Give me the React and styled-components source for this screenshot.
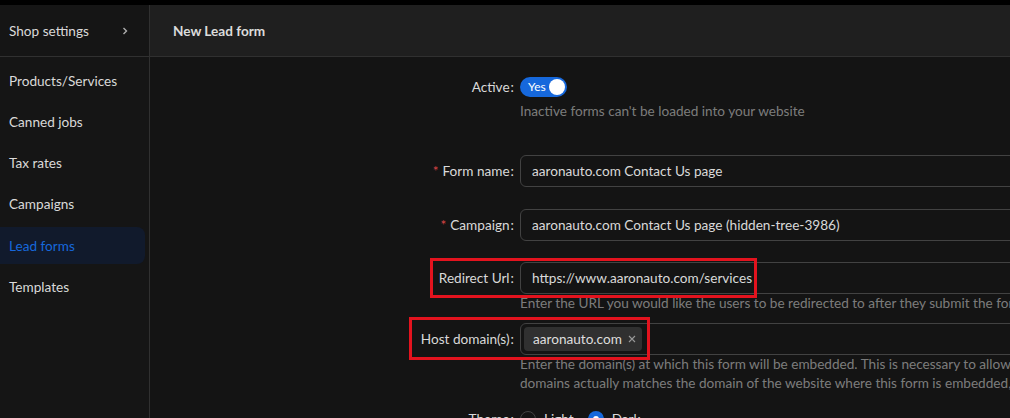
import React, { useState } from "react";
import styled, { createGlobalStyle } from "styled-components";

const GlobalStyle = createGlobalStyle`
  html, body {
    margin: 0;
    padding: 0;
    background: #000;
    overflow: hidden;
  }
  body {
    font-family: Lato, "Open Sans", sans-serif;
    font-size: 13.6px;
    color: rgba(255, 255, 255, 0.85);
  }
`;

const sideItems = [
  "Products/Services",
  "Canned jobs",
  "Tax rates",
  "Campaigns",
  "Lead forms",
  "Templates",
];

const App = () => {
  const [active, setActive] = useState("Lead forms");
  const [dark, setDark] = useState(true);
  return (
    <>
      <GlobalStyle />
      <Page>
        <Sidebar>
          <SideHeader>
            Shop settings
            <Chevron viewBox="0 0 10 10">
              <path d="M3.5 2 L6.5 5 L3.5 8" />
            </Chevron>
          </SideHeader>
          <SideList>
            {sideItems.map(item => (
              <SideItem
                key={item}
                selected={item === active}
                onClick={() => setActive(item)}
              >
                {item}
              </SideItem>
            ))}
          </SideList>
        </Sidebar>
        <Main>
          <MainHeader>New Lead form</MainHeader>
          <Form>
            <Row gap={34}>
              <Label>Active</Label>
              <Control>
                <Switch>
                  <span>Yes</span>
                  <Knob />
                </Switch>
                <Help top={5}>Inactive forms can't be loaded into your website</Help>
              </Control>
            </Row>
            <Row gap={22}>
              <Label required>Form name</Label>
              <Control>
                <Input>aaronauto.com Contact Us page</Input>
              </Control>
            </Row>
            <Row gap={21}>
              <Label required>Campaign</Label>
              <Control>
                <Input>aaronauto.com Contact Us page (hidden-tree-3986)</Input>
              </Control>
            </Row>
            <Row gap={10}>
              <Marker left={280} top={-4} width={327} height={40} />
              <Label>Redirect Url</Label>
              <Control>
                <Input>https://www.aaronauto.com/services</Input>
                <Help>
                  Enter the URL you would like the users to be redirected to
                  after they submit the form
                </Help>
              </Control>
            </Row>
            <Row gap={10}>
              <Marker left={259} top={-6} width={241} height={43} />
              <Label>Host domain(s)</Label>
              <Control>
                <Input tags>
                  <Tag>
                    aaronauto.com
                    <Close viewBox="0 0 10 10">
                      <path d="M2 2 L8 8 M8 2 L2 8" />
                    </Close>
                  </Tag>
                </Input>
                <Help>
                  Enter the domain(s) at which this form will be embedded. This
                  is necessary to allow requests from your website. If none of
                  these<br />
                  domains actually matches the domain of the website where this
                  form is embedded, your form will not work.
                </Help>
              </Control>
            </Row>
            <Row>
              <Label>Theme</Label>
              <Control>
                <Radios>
                  <RadioOpt onClick={() => setDark(false)}>
                    <Radio checked={!dark} />
                    Light
                  </RadioOpt>
                  <RadioOpt onClick={() => setDark(true)}>
                    <Radio checked={dark} />
                    Dark
                  </RadioOpt>
                </Radios>
              </Control>
            </Row>
          </Form>
        </Main>
      </Page>
    </>
  );
};

export default App;

const Page = styled.div`
  display: flex;
  margin-top: 5px;
  height: 413px;
  background: #151515;
`;

const Sidebar = styled.aside`
  width: 149px;
  flex-shrink: 0;
  border-right: 1px solid #303030;
  background: #151515;
`;

const SideHeader = styled.div`
  height: 52px;
  box-sizing: border-box;
  border-bottom: 1px solid #303030;
  display: flex;
  align-items: center;
  justify-content: space-between;
  padding: 0 19px 0 9px;
`;

const Chevron = styled.svg`
  width: 10px;
  height: 10px;
  fill: none;
  stroke: rgba(255, 255, 255, 0.65);
  stroke-width: 1.4;
`;

const SideList = styled.div`
  display: flex;
  flex-direction: column;
  gap: 4.3px;
  padding-top: 5px;
  padding-right: 4px;
`;

const SideItem = styled.div`
  height: 37px;
  display: flex;
  align-items: center;
  padding-left: 9px;
  border-radius: 0 8px 8px 0;
  cursor: pointer;
  color: ${p => (p.selected ? "#1668dc" : "rgba(255,255,255,0.85)")};
  background: ${p => (p.selected ? "#111a2c" : "transparent")};
`;

const Main = styled.main`
  flex: 1;
  min-width: 0;
  background: #141414;
`;

const MainHeader = styled.div`
  height: 52px;
  box-sizing: border-box;
  border-bottom: 1px solid #303030;
  background: #1f1f1f;
  display: flex;
  align-items: center;
  padding-left: 23px;
  font-weight: 700;
`;

const Form = styled.div`
  padding-top: 14px;
  display: flex;
  flex-direction: column;
`;

const Row = styled.div`
  display: grid;
  grid-template-columns: 370px 800px;
  align-items: start;
  position: relative;
  margin-bottom: ${p => p.gap || 0}px;
`;

const Marker = styled.div`
  position: absolute;
  left: ${p => p.left}px;
  top: ${p => p.top}px;
  width: ${p => p.width}px;
  height: ${p => p.height}px;
  box-sizing: border-box;
  border: 3px solid #e3131e;
  pointer-events: none;
  z-index: 2;
`;

const Label = styled.label`
  height: 32px;
  display: flex;
  align-items: center;
  justify-content: flex-end;
  padding-right: 6px;
  white-space: nowrap;
  &::before {
    content: ${p => (p.required ? '"*"' : "none")};
    color: #dc4446;
    margin-right: 4px;
  }
  &::after {
    content: ":";
    margin-left: 1px;
  }
`;

const Control = styled.div`
  display: flex;
  flex-direction: column;
  align-items: flex-start;
`;

const Switch = styled.button`
  margin-top: 6px;
  height: 20px;
  width: 47px;
  border: none;
  border-radius: 10px;
  background: #1668dc;
  color: #fff;
  font: inherit;
  font-size: 12px;
  display: flex;
  align-items: center;
  justify-content: space-between;
  padding: 0 2px 0 8px;
  cursor: pointer;
  span {
    line-height: 1;
  }
`;

const Knob = styled.i`
  width: 16px;
  height: 16px;
  border-radius: 50%;
  background: #fff;
`;

const Help = styled.div`
  color: rgba(255, 255, 255, 0.45);
  line-height: 19px;
  padding-top: ${p => p.top || 0}px;
  white-space: nowrap;
`;

const Input = styled.div`
  width: 700px;
  height: 32px;
  box-sizing: border-box;
  border: 1px solid #424242;
  border-radius: 6px;
  background: #141414;
  display: flex;
  align-items: center;
  padding: 0 ${p => (p.tags ? "3px" : "11px")};
  color: rgba(255, 255, 255, 0.85);
  white-space: nowrap;
`;

const Tag = styled.span`
  height: 24px;
  display: inline-flex;
  align-items: center;
  gap: 5px;
  padding: 0 5px 0 9px;
  border-radius: 4px;
  background: rgba(255, 255, 255, 0.12);
`;

const Close = styled.svg`
  width: 10px;
  height: 10px;
  fill: none;
  stroke: rgba(255, 255, 255, 0.5);
  stroke-width: 1.1;
`;

const Radios = styled.div`
  display: flex;
  align-items: center;
  gap: 14px;
  height: 32px;
`;

const RadioOpt = styled.label`
  display: flex;
  align-items: center;
  gap: 8px;
  cursor: pointer;
`;

const Radio = styled.span`
  width: 16px;
  height: 16px;
  box-sizing: border-box;
  border-radius: 50%;
  border: ${p => (p.checked ? "5px solid #1668dc" : "1px solid #424242")};
  background: ${p => (p.checked ? "#fff" : "transparent")};
`;
